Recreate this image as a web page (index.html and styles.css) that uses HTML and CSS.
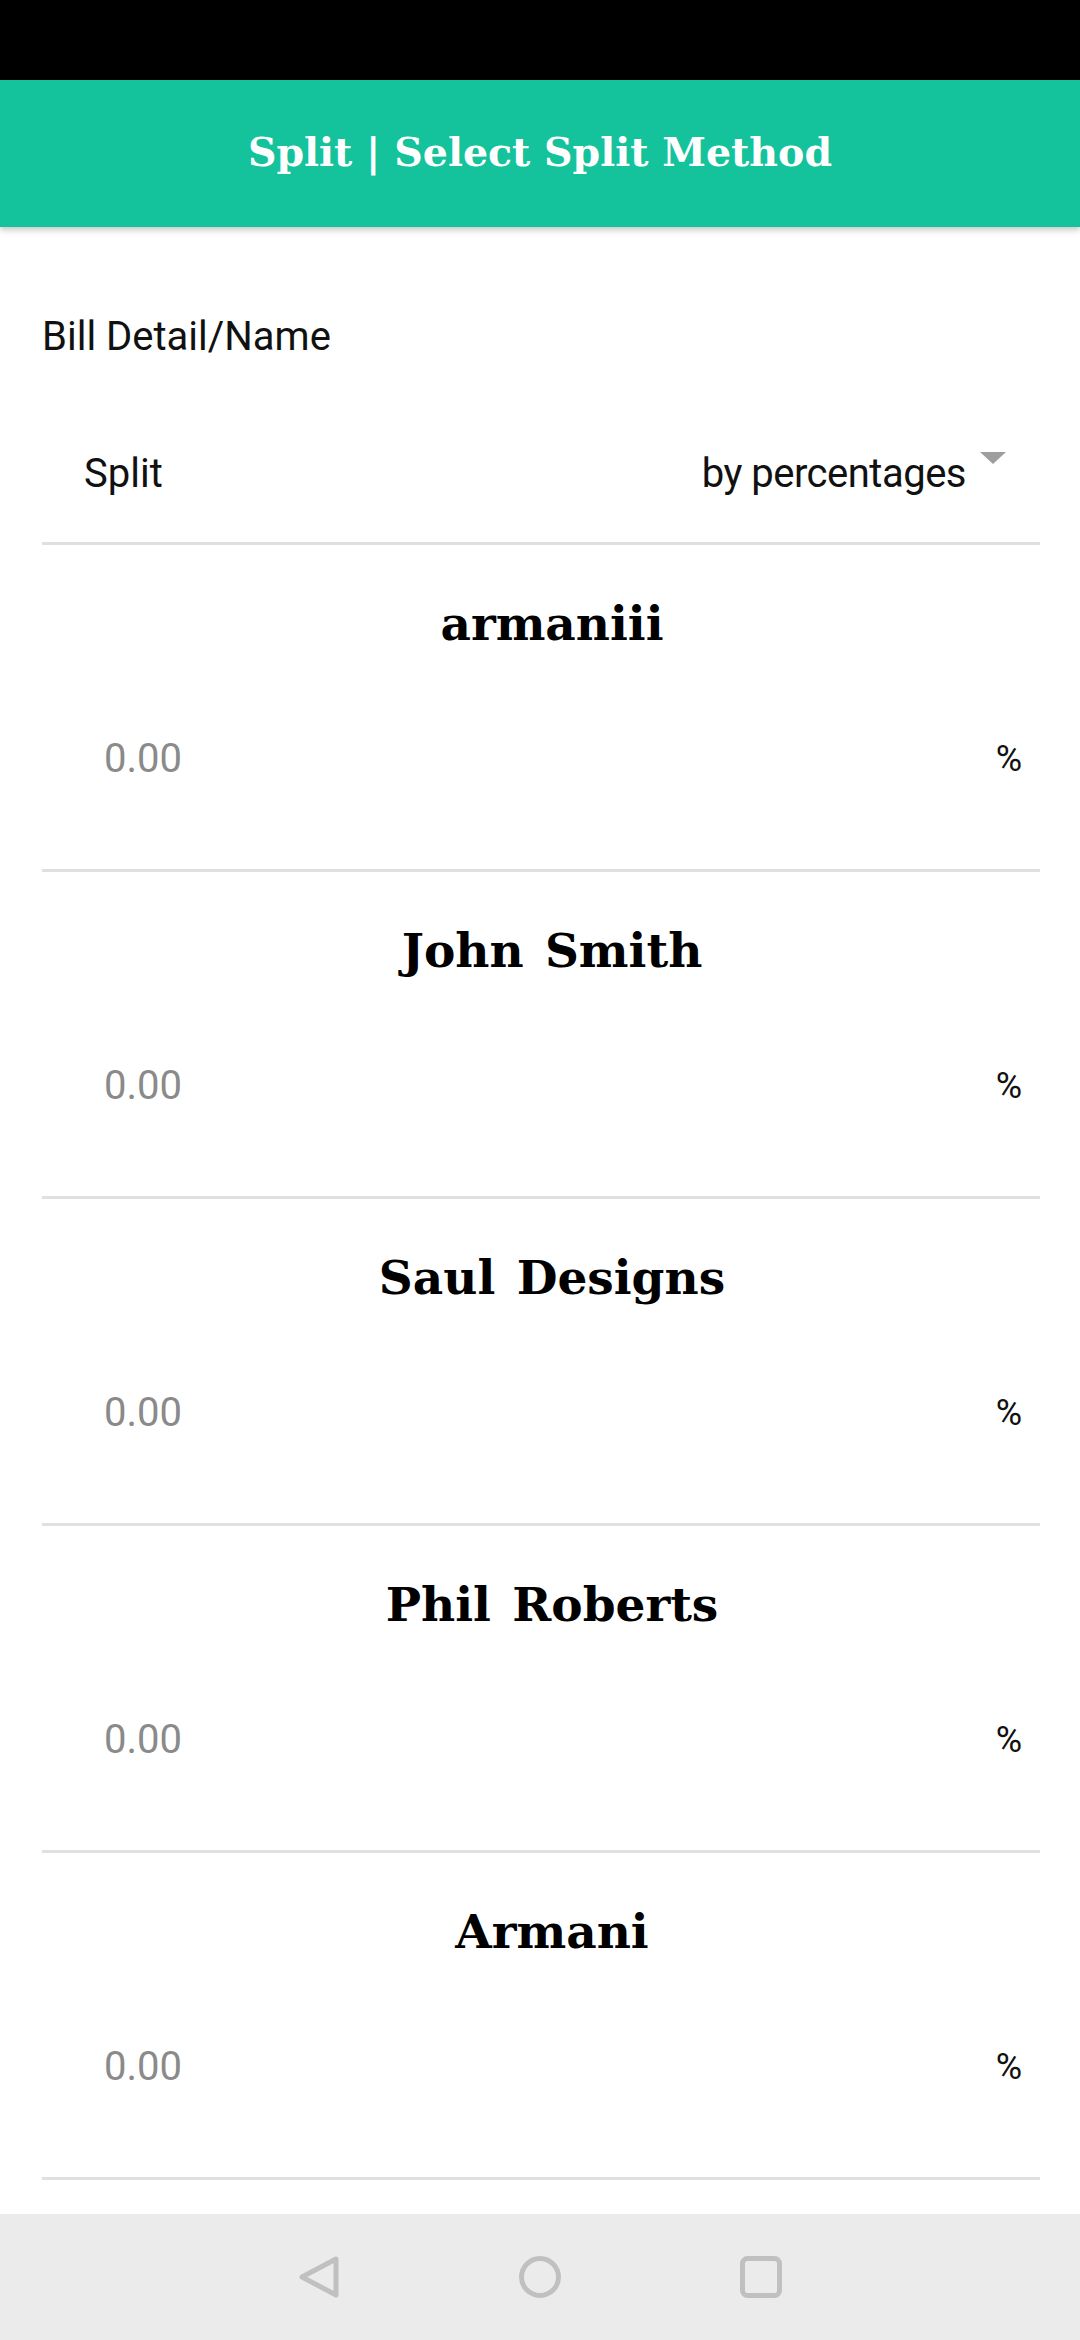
FILE: index.html
```html
<!DOCTYPE html>
<html lang="en">
<head>
<meta charset="utf-8">
<title>Split | Select Split Method</title>
<link rel="stylesheet" href="styles.css">
</head>
<body>
<div class="screen">
  <div class="status-bar"></div>
  <header class="app-bar">
    <h1 class="app-title">Split | Select Split Method</h1>
  </header>
  <main class="content">
    <div class="bill-name">Bill Detail/Name</div>
    <div class="split-row">
      <span class="split-label">Split</span>
      <span class="split-select">
        <span class="split-value">by percentages</span>
        <span class="caret"></span>
      </span>
    </div>
    <section class="person">
      <div class="person-name">armaniii</div>
      <div class="amount-row"><span class="amount">0.00</span><span class="unit">%</span></div>
    </section>
    <section class="person">
      <div class="person-name">John Smith</div>
      <div class="amount-row"><span class="amount">0.00</span><span class="unit">%</span></div>
    </section>
    <section class="person">
      <div class="person-name">Saul Designs</div>
      <div class="amount-row"><span class="amount">0.00</span><span class="unit">%</span></div>
    </section>
    <section class="person">
      <div class="person-name">Phil Roberts</div>
      <div class="amount-row"><span class="amount">0.00</span><span class="unit">%</span></div>
    </section>
    <section class="person">
      <div class="person-name">Armani</div>
      <div class="amount-row"><span class="amount">0.00</span><span class="unit">%</span></div>
    </section>
  </main>
  <nav class="nav-bar">
    <svg class="nav-icon" width="44" height="44" viewBox="0 0 44 44"><path d="M40 4 L6 22 L40 40 Z" fill="none" stroke="#c0c0c0" stroke-width="5" stroke-linejoin="round"/></svg>
    <svg class="nav-icon" width="44" height="44" viewBox="0 0 44 44"><circle cx="22" cy="22" r="18.5" fill="none" stroke="#c0c0c0" stroke-width="5"/></svg>
    <svg class="nav-icon" width="44" height="44" viewBox="0 0 44 44"><rect x="2.5" y="3.5" width="37" height="37" rx="5" fill="none" stroke="#c0c0c0" stroke-width="5"/></svg>
  </nav>
</div>
</body>
</html>
```
FILE: styles.css
```css
html, body {
  margin: 0;
  padding: 0;
  background: #ffffff;
}
body {
  font-family: Roboto, "Noto Sans", sans-serif;
  color: #111111;
}
.screen {
  width: 1080px;
  height: 2340px;
  display: flex;
  flex-direction: column;
  overflow: hidden;
}
.status-bar {
  height: 80px;
  background: #000000;
  flex: none;
}
.app-bar {
  height: 147px;
  flex: none;
  background: #14c29b;
  display: flex;
  align-items: center;
  justify-content: center;
  box-shadow: 0 3px 6px rgba(0, 0, 0, 0.22);
  position: relative;
  z-index: 1;
}
.app-title {
  margin: 0 0 4px 0;
  color: #ffffff;
  font-family: "DejaVu Serif", serif;
  font-weight: bold;
  font-size: 39.5px;
}
.content {
  flex: 1;
  padding: 0 40px 0 42px;
  overflow: hidden;
}
.bill-name {
  margin-top: 80px;
  height: 60px;
  line-height: 60px;
  font-size: 40px;
}
.split-row {
  display: flex;
  align-items: flex-start;
  justify-content: space-between;
  padding: 77px 34px 38px 42px;
  border-bottom: 3px solid #e0e0e0;
}
.split-label,
.split-value {
  font-size: 40px;
  line-height: 60px;
}
.split-select {
  display: flex;
  align-items: flex-start;
}
.split-value {
  letter-spacing: -0.5px;
}
.caret {
  width: 0;
  height: 0;
  margin: 8px 0 0 14px;
  border-left: 13px solid transparent;
  border-right: 13px solid transparent;
  border-top: 12px solid #9e9e9e;
}
.person {
  height: 327px;
  box-sizing: border-box;
  border-bottom: 3px solid #e0e0e0;
  padding-top: 49px;
}
.person-name {
  text-align: center;
  padding-left: 22px;
  font-family: "DejaVu Serif", serif;
  font-weight: bold;
  font-size: 47px;
  line-height: 60px;
  word-spacing: 5px;
  color: #000000;
}
.amount-row {
  margin-top: 75px;
  display: flex;
  justify-content: space-between;
  padding: 0 18px 0 62px;
  line-height: 60px;
}
.amount {
  font-size: 40px;
  color: #8a8a8a;
}
.unit {
  font-size: 36px;
  color: #111111;
}
.nav-bar {
  height: 126px;
  flex: none;
  background: #ebebeb;
  display: flex;
  align-items: center;
  justify-content: center;
  gap: 178px;
}
.nav-icon {
  display: block;
}
```
